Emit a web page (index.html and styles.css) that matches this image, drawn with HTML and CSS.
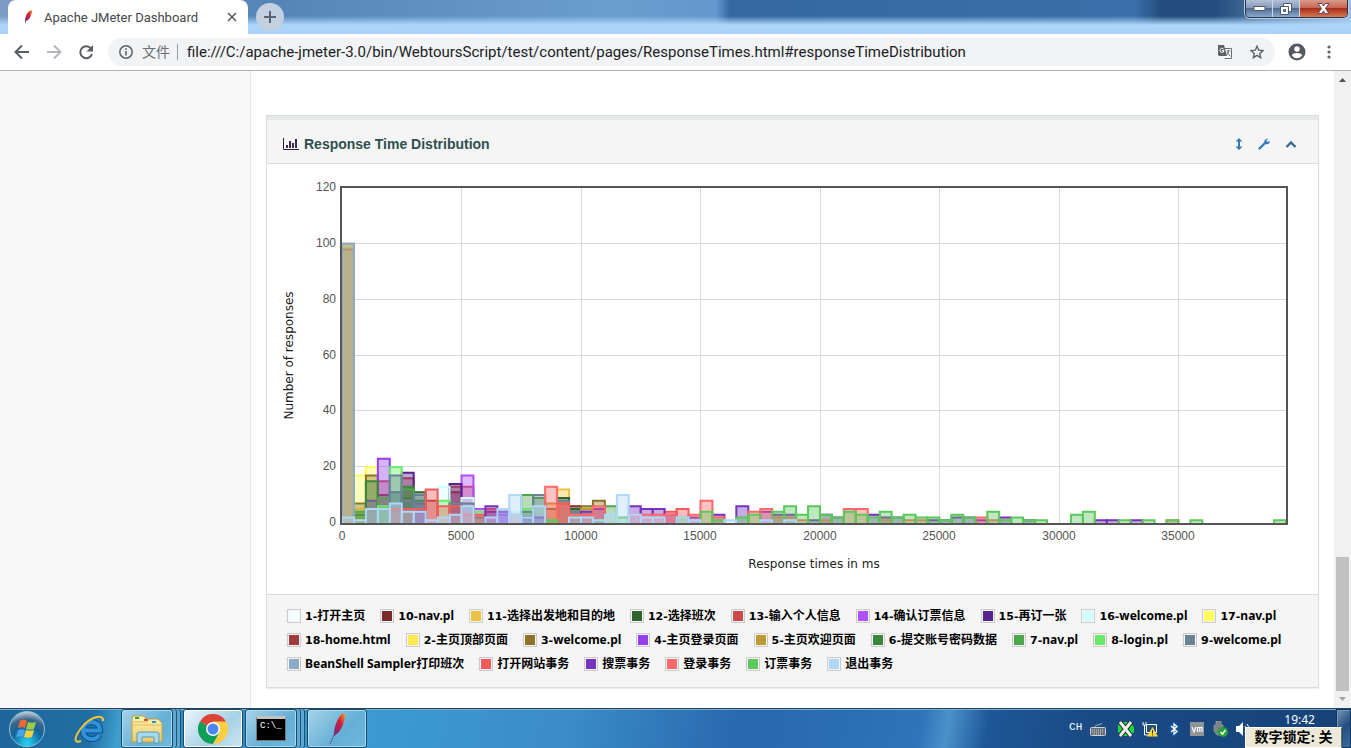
FILE: index.html
```
<!DOCTYPE html>
<html lang="zh">
<head>
    <meta charset="utf-8">
    <title>Apache JMeter Dashboard</title>
    <link rel="stylesheet" href="styles.css">
</head>
<body>
    <svg class="defs" width="0" height="0">
        <defs>
            <linearGradient id="feather" x1="1" y1="0" x2="0" y2="1">
                <stop offset="0" stop-color="#f9a01b"/>
                <stop offset=".4" stop-color="#d0203c"/>
                <stop offset="1" stop-color="#6c2a80"/>
            </linearGradient>
            <radialGradient id="orb" cx=".5" cy=".9" r=".9">
                <stop offset="0" stop-color="#25d6fb"/>
                <stop offset=".5" stop-color="#12639a"/>
                <stop offset=".75" stop-color="#3c6688"/>
                <stop offset="1" stop-color="#c6d4df"/>
            </radialGradient>
            <linearGradient id="folder" x1="0" y1="0" x2="0" y2="1">
                <stop offset="0" stop-color="#fff3b5"/>
                <stop offset="1" stop-color="#ecc964"/>
            </linearGradient>
        </defs>
    </svg>

    <header class="tabstrip">
        <div class="tab">
            <svg width="14" height="16" viewBox="0 0 14 16"><path d="M10 1c2 1 1 3 0 5-1 3-2 5-5 6l-1 3v-3c0-4 2-9 6-11z" fill="url(#feather)"/></svg>
            <span class="tab-title">Apache JMeter Dashboard</span>
            <button class="tab-close" aria-label="Close tab"><svg width="10" height="10" viewBox="0 0 10 10"><path d="M1 1l8 8M9 1l-8 8" stroke="#5f6368" stroke-width="1.7"/></svg></button>
        </div>
        <button class="new-tab" aria-label="New tab"><svg width="12" height="12" viewBox="0 0 12 12"><path d="M6 0v12M0 6h12" stroke="#596570" stroke-width="2"/></svg></button>
        <div class="window-buttons">
            <button aria-label="Minimize"><svg width="13" height="7" viewBox="0 0 13 7"><rect x="1" y="1.500" width="11" height="4" fill="#fff" stroke="#4c5971"/></svg></button>
            <button aria-label="Restore"><svg width="12" height="12" viewBox="0 0 12 12"><path d="M3.500.5h8v8h-8z" fill="#fff" stroke="#4c5971"/><path d="M.5 3.500h8v8h-8z" fill="#fff" stroke="#4c5971"/><path d="M3.500 6.500h2v2h-2z" fill="#8ca0be" stroke="#4c5971"/></svg></button>
            <button class="close" aria-label="Close"><svg width="13" height="11" viewBox="0 0 13 11"><path d="M1 .5h3.500l2 2.500 2-2.500H12L8.500 5.500l3.500 5H8.500l-2-2.500-2 2.500H1l3.500-5z" fill="#fff" stroke="#59485a"/></svg></button>
        </div>
    </header>

    <nav class="toolbar">
        <button aria-label="Back"><svg width="16" height="16" viewBox="0 0 16 16"><path d="M15 8H2M8 1.500L1.500 8 8 14.500" fill="none" stroke="#5a5e63" stroke-width="2"/></svg></button>
        <button aria-label="Forward"><svg width="16" height="16" viewBox="0 0 16 16"><path d="M1 8h13M8 1.500L14.500 8 8 14.500" fill="none" stroke="#b5b7ba" stroke-width="2"/></svg></button>
        <button aria-label="Reload"><svg width="16" height="16" viewBox="0 0 16 16"><path d="M13 4.500A6 6 0 1 0 14 10" fill="none" stroke="#5a5e63" stroke-width="2"/><path d="M15 1v6.500H8.500z" fill="#5a5e63"/></svg></button>
        <div class="omnibox">
            <svg width="14" height="14" viewBox="0 0 14 14"><circle cx="7" cy="7" r="6.200" fill="none" stroke="#5f6368" stroke-width="1.500"/><path d="M7 6v4.500M7 3.300v1.600" stroke="#5f6368" stroke-width="1.600"/></svg>
            <label for="url">文件</label>
            <input id="url" type="text" value="file:///C:/apache-jmeter-3.0/bin/WebtoursScript/test/content/pages/ResponseTimes.html#responseTimeDistribution">
            <button aria-label="Translate"><svg width="14" height="14" viewBox="0 0 14 14"><path d="M6 3.500h7.500v10H6.500" fill="#fff" stroke="#6b6f74"/><path d="M0 0h6l3 11H1L0 10z" fill="#5f6368"/><path d="M5.500 4A2 2 0 1 0 6 5.600H4" fill="none" stroke="#fff"/><path d="M8.500 6h4M10.500 5v1c0 2-1 3-2 4M9 7l3 4" fill="none" stroke="#6b6f74"/></svg></button>
            <button aria-label="Bookmark"><svg width="14" height="14" viewBox="0 0 14 14"><path d="M7 1.200l1.700 4 4.300.4-3.300 2.800 1 4.300L7 10.400l-3.700 2.300 1-4.300L1 5.600l4.300-.4z" fill="none" stroke="#5f6368" stroke-width="1.400"/></svg></button>
        </div>
        <button class="profile" aria-label="Profile"><svg width="18" height="18" viewBox="0 0 18 18"><circle cx="9" cy="9" r="8.500" fill="#555a60"/><circle cx="9" cy="6" r="2.700" fill="#fff"/><path d="M3.800 12.200c1-2.800 9.400-2.800 10.400 0-1.200 2-3 3-5.200 3s-4-1-5.200-3z" fill="#fff"/></svg></button>
        <button class="menu" aria-label="Menu"><svg width="4" height="14" viewBox="0 0 4 14"><g fill="#5f6368"><circle cx="2" cy="2" r="1.600"/><circle cx="2" cy="7" r="1.600"/><circle cx="2" cy="12" r="1.600"/></g></svg></button>
    </nav>

    <div class="viewport">
        <aside class="sidebar"></aside>
        <main>
            <section class="panel">
                <div class="panel-heading">
                    <svg width="16" height="14" viewBox="0 0 16 14"><path d="M.5 1v11.500H16" fill="none" stroke="#2a2230"/><path d="M4 11V8M7 11V4M10 11V6M13 11V2" stroke="#3c2c50" stroke-width="2"/></svg>
                    <h1>Response Time Distribution</h1>
                    <button aria-label="Resize"><svg width="8" height="12" viewBox="0 0 8 12"><path d="M4 0l3.500 3.500H5v5h2.500L4 12 .5 8.500H3v-5H.5z" fill="#337ab7"/></svg></button>
                    <button aria-label="Options"><svg width="12" height="12" viewBox="0 0 12 12"><path d="M1.500 10.500l6-6" stroke="#337ab7" stroke-width="2.400" stroke-linecap="round"/><path d="M11 .8L8.500 2l.2 1.600 1.500.2L11.800 3C12 5.500 9.500 7 7.500 6 5 4 6.500-.2 11 .8z" fill="#337ab7"/></svg></button>
                    <button aria-label="Collapse"><svg width="12" height="8" viewBox="0 0 12 8"><path d="M1.500 7L6 2.500 10.500 7" fill="none" stroke="#3b6a94" stroke-width="2.400"/></svg></button>
                </div>
                <div class="panel-body">
                    <svg id="chart" role="img" aria-label="Response Time Distribution"></svg>
                </div>
                <ul class="legend" id="legend"></ul>
            </section>
        </main>
        <div class="scrollbar">
            <svg width="7" height="4" viewBox="0 0 7 4"><path d="M3.500 0L7 4H0z" fill="#505050"/></svg>
            <div class="thumb"></div>
            <svg width="7" height="4" viewBox="0 0 7 4"><path d="M3.500 4L7 0H0z" fill="#a3a3a3"/></svg>
        </div>
    </div>

    <footer class="taskbar">
        <button class="start" aria-label="Start"><svg width="38" height="38" viewBox="0 0 38 38"><circle cx="19" cy="19" r="17.500" fill="url(#orb)" stroke="#8cc3df"/><path d="M12 11c3-2 5-1 7 0l-2 7c-2-1-4-1-7 0z" fill="#ee6a32"/><path d="M20 12c3 1 5 1 8 0l-2 7c-3 1-5 1-8 0z" fill="#9ccb45"/><path d="M10 20c3-1 5-1 7 0l-2 7c-2-1-4-1-7 0z" fill="#45a4e6"/><path d="M18 20c3 1 5 1 8 0l-2 7c-3 1-5 1-8 0z" fill="#fbcf3e"/></svg></button>
        <button class="pin" aria-label="Internet Explorer"><svg width="34" height="34" viewBox="0 0 34 34"><path d="M12 18.500H28C28 7 11 7 11 18.500 11 29 25 29 27 23" fill="none" stroke="#0f4f92" stroke-width="6"/><path d="M12 18.500H28C28 7 11 7 11 18.500 11 29 25 29 27 23" fill="none" stroke="#2f93d8" stroke-width="4"/><path d="M31 9c1-8-13-4-21 6C2 25 1 32 9 29" fill="none" stroke="#f3c433" stroke-width="2"/></svg></button>
        <button class="task stacked" aria-label="Explorer"><svg width="34" height="30" viewBox="0 0 34 30"><path d="M3 2h11l2 3h12l4 4v19H2V5z" fill="url(#folder)" stroke="#c29f43"/><path d="M5 4h4" stroke="#2aa53c" stroke-width="2"/><path d="M14 6h4" stroke="#d2502c" stroke-width="2"/><path d="M22 8h4" stroke="#2d8fd2" stroke-width="2"/><path d="M3 8h15M3 11h28" stroke="#dcbb5c"/><path d="M7 29V20q0-2 2-2h18q2 0 2 2v9h-5v-6H12v6z" fill="#a6d8ef" stroke="#599bbc"/></svg></button>
        <button class="task active" aria-label="Chrome"><svg width="30" height="30" viewBox="0 0 30 30"><path d="M15 15L2 7.500A15 15 0 0 1 28 7.500z" fill="#dc4437"/><path d="M15 15L2 7.500A15 15 0 0 0 15 30l6-11z" fill="#0f9d58"/><path d="M15 7.500h13A15 15 0 0 1 15 30l6.500-11z" fill="#fdcd40"/><circle cx="15" cy="15" r="7" fill="#fff"/><circle cx="15" cy="15" r="5.500" fill="#4a87f0"/></svg></button>
        <button class="task stacked" aria-label="Command Prompt"><span class="console">C:\_</span></button>
        <button class="task" aria-label="JMeter"><svg width="20" height="34" viewBox="0 0 20 34"><path d="M16 1c4 1 1 13-5 20l-4 3c-1-7 4-20 9-23z" fill="url(#feather)"/><path d="M7 23l-4 9" stroke="#62306f" stroke-dasharray="2 1"/></svg></button>
        <div class="tray">
            <span class="lang">CH</span>
            <svg width="16" height="16" viewBox="0 0 16 16"><path d="M5 6c0-3 5-1 7-4" fill="none" stroke="#aeb8bc"/><rect x=".5" y="6.500" width="15" height="8" rx="1" fill="#657078" stroke="#ccd1d3"/><path d="M2 9h12M2 11h12M4 13h8" stroke="#d4d7d8" stroke-dasharray="1 1"/></svg>
            <svg class="gap" width="16" height="16" viewBox="0 0 16 16"><path d="M0 4l4-3h8l4 5v5l-4 4H3l-3-4z" fill="#16da3c"/><path d="M2 1l11 14M13 1L2 15" stroke="#222" stroke-width="5"/><path d="M2 1l11 14M13 1L2 15" stroke="#eee" stroke-width="3"/></svg>
            <svg width="16" height="16" viewBox="0 0 16 16"><path d="M4.500 3.500h10v8h-10z" fill="#235080" stroke="#fff"/><path d="M1 1v3h3V1M2.500 4v10H8" fill="none" stroke="#fff"/><path d="M10.500 6l5.500 9.500H5z" fill="#f9d83b"/><path d="M10.500 9v3.500M10.500 13.500v1" stroke="#333"/></svg>
            <svg width="16" height="16" viewBox="0 0 16 16"><ellipse cx="8" cy="8" rx="5.500" ry="7.500" fill="#124f9a"/><path d="M5 5l6 5.500L8 13V3l3 2.500L5 11" fill="none" stroke="#fff" stroke-width="1.300"/></svg>
            <svg width="14" height="14" viewBox="0 0 14 14"><rect width="14" height="14" fill="#8e9498"/><path d="M2 5l2 5 2-5M7.500 10V5.500H12V10M9.800 5.500V10" fill="none" stroke="#fff" stroke-width="1.200"/></svg>
            <svg width="16" height="16" viewBox="0 0 16 16"><path d="M4 0h5v4h2v6l-3 4H5L2 10V4h2z" fill="#7c8285" stroke="#a9adaf" stroke-width=".6"/><circle cx="11" cy="11" r="5" fill="#25a335"/><path d="M8.500 11l2 2 3-4" fill="none" stroke="#fff" stroke-width="1.500"/></svg>
            <svg width="14" height="14" viewBox="0 0 14 14"><path d="M0 4h3l4-4v14l-4-4H0z" fill="#fff"/><path d="M9 4q2 3 0 6M11 2q4 5 0 10" fill="none" stroke="#fff"/></svg>
        </div>
        <time>19:42</time>
        <button class="show-desktop" aria-label="Show desktop"></button>
        <div class="tooltip">数字锁定: 关</div>
    </footer>

    <script src="chart.js"></script>
</body>
</html>
```
FILE: styles.css
```
* {
    box-sizing: border-box;
}
body {
    margin: 0;
    height: 100vh;
    display: flex;
    flex-direction: column;
    overflow: hidden;
    background: white;
    font-family: "Noto Sans", "Noto Sans CJK SC", sans-serif;
}
button {
    padding: 0;
    border: none;
    background: none;
    display: flex;
    align-items: center;
    justify-content: center;
}
svg {
    display: block;
    flex: none;
}
.defs {
    position: absolute;
}

/* browser window */
.tabstrip {
    height: 34px;
    flex: none;
    display: flex;
    padding-left: 8px;
    background:
        linear-gradient(to bottom, transparent 16px, #aed6f9 25px, #abd2f6),
        linear-gradient(to right, #7c9cc4, #5585b8 20%, #6c9dd0 45%, #6497cd 53%, #34689f 54%, #3a70a9 84%, #214c7b 86%, #234e7d 90%, #9dbce0);
}
.tab {
    width: 240px;
    display: flex;
    align-items: center;
    padding: 0 11px 0 13px;
    background: white;
    border-radius: 8px 8px 0 0;
}
.tab-title {
    flex: 1;
    margin-left: 9px;
    font-family: "Roboto", sans-serif;
    font-size: 13px;
    color: #45484c;
    white-space: nowrap;
}
.new-tab {
    width: 28px;
    height: 28px;
    margin: 3px 0 0 8px;
    border-radius: 50%;
    background: #c3d0df;
}
.window-buttons {
    height: 18px;
    margin: 0 3px 0 auto;
    display: flex;
    border: 1px solid #29384f;
    border-top: none;
    border-radius: 0 0 5px 5px;
    box-shadow: 0 0 0 1px #b7cbe2;
    overflow: hidden;
}
.window-buttons button {
    width: 27px;
    border-right: 1px solid #ccd8e8;
    background: linear-gradient(#b2c1d5, #8299b8 48%, #536c91 50%, #8ba8ce);
}
.window-buttons .close {
    width: 47px;
    border: none;
    background: linear-gradient(#d99a8b, #c56350 48%, #a92d18 50%, #d67951);
}
.toolbar {
    height: 37px;
    flex: none;
    display: flex;
    align-items: center;
    padding: 0 20px 0 14px;
    border-bottom: 1px solid #b3b3b3;
}
.toolbar > button {
    width: 16px;
    margin-right: 16px;
}
.omnibox {
    flex: 1;
    height: 28px;
    margin-left: -2px;
    display: flex;
    align-items: center;
    padding: 0 11px;
    border-radius: 14px;
    background: #f1f3f4;
}
.omnibox label {
    margin-left: 9px;
    padding-right: 7px;
    border-right: 1px solid #9b9ea1;
    font-size: 14px;
    line-height: 16px;
    color: #6b6f73;
}
.omnibox input {
    flex: 1;
    min-width: 0;
    padding: 0 0 0 9px;
    border: none;
    background: none;
    font-family: "Roboto", sans-serif;
    font-size: 15px;
    color: #202124;
}
.omnibox button {
    margin-left: 18px;
}
.toolbar .profile {
    width: 18px;
    margin: 0 21px 0 13px;
}
.toolbar .menu {
    width: 4px;
    margin: 0;
}

/* report page */
.viewport {
    flex: 1;
    min-height: 0;
    display: flex;
}
.sidebar {
    width: 251px;
    flex: none;
    background: #f8f8f8;
    border-right: 1px solid #e7e7e7;
}
main {
    flex: 1;
    min-width: 0;
    padding: 44px 15px;
}
.panel {
    border: 1px solid #ddd;
    box-shadow: 0 1px 1px #eee;
}
.panel-heading {
    height: 48px;
    display: flex;
    align-items: center;
    padding: 5px 21px 0 16px;
    border-top: 4px solid #e6e9ea;
    border-bottom: 1px solid #ddd;
    background: #f5f5f5;
}
.panel-heading h1 {
    flex: 1;
    margin: 0 0 0 5px;
    font: bold 14px "Liberation Sans", sans-serif;
    color: #2f4f4f;
}
.panel-heading button {
    margin-left: 15px;
}
.panel-body {
    height: 430px;
}
#chart {
    width: 100%;
    height: 100%;
}
.tick {
    font: 12px "Liberation Sans", sans-serif;
    fill: #545454;
}
.axis-title {
    font: 12px "DejaVu Sans", sans-serif;
    fill: #222;
}
.grid {
    stroke: #d9d9d9;
}
.frame {
    fill: none;
    stroke: #545454;
    stroke-width: 2;
}
.legend {
    margin: 0;
    padding: 9px 16px 11px 20px;
    display: flex;
    flex-wrap: wrap;
    column-gap: 15px;
    list-style: none;
    background: #f5f5f5;
    border-top: 1px solid #ddd;
    font-size: 12px;
    font-weight: bold;
    line-height: 24px;
}
.legend li {
    display: flex;
    align-items: center;
    height: 24px;
    white-space: nowrap;
}
.legend .number {
    font-family: "DejaVu Sans", sans-serif;
    font-size: 11px;
}
.swatch {
    width: 14px;
    height: 14px;
    margin-right: 4px;
    padding: 1px;
    border: 1px solid #ccc;
    background-color: white;
    background-clip: content-box;
}
.scrollbar {
    width: 17px;
    flex: none;
    display: flex;
    flex-direction: column;
    align-items: center;
    padding: 7px 0;
    background: #f1f1f1;
}
.thumb {
    width: 13px;
    height: 134px;
    margin: auto 0 6px;
    background: #c1c1c1;
}

/* windows taskbar */
.taskbar {
    position: relative;
    height: 40px;
    flex: none;
    display: flex;
    align-items: center;
    border-top: 1px solid #27445f;
    box-shadow: inset 0 1px #79add2;
    background: linear-gradient(100deg, #1d6699, #216fa4 7%, #3e9fcd 9%, #2c8ac0 15%, #3c9bd1 27%, #3b8cc9 42%, #2868ac 55%, #2d74b8 68%, #4a91cb 70%, #1d5797 73%, #1a4b85 80%, #164277);
}
.start {
    width: 38px;
    margin-left: 8px;
}
.pin {
    width: 34px;
    margin: 0 15px 0 26px;
}
.task {
    width: 60px;
    height: 39px;
    margin: 0 2px 0 0;
    border: 1px solid #1d4a6b;
    border-radius: 3px;
    box-shadow: inset 0 0 0 1px #a9d8ef;
    background: linear-gradient(135deg, #a8d3e8, #64afd6 60%, #6dbbdd);
}
.task.active {
    background: linear-gradient(135deg, #edf6fa, #a6d1e7 60%, #cfe7f2);
    box-shadow: inset 0 0 0 1px white;
}
.task.stacked {
    width: 52px;
    margin-right: 10px;
    box-shadow: inset 0 0 0 1px #a9d8ef, 3px 0 #5da9d1, 4px 0 #1e5273, 7px 0 #5da9d1, 8px 0 #1e5273;
}
.console {
    width: 30px;
    height: 25px;
    padding-left: 3px;
    border: 1px solid #777;
    border-top: 3px solid #c3c3c3;
    background: black;
    color: white;
    font: 9px/14px "Liberation Mono", monospace;
    text-align: left;
}
.tray {
    display: flex;
    align-items: center;
    gap: 8px;
    margin: 0 34px 0 auto;
}
.tray .gap {
    margin-left: 4px;
}
.lang {
    margin-bottom: 4px;
    font: 11px "Liberation Mono", monospace;
    color: white;
}
time {
    align-self: flex-start;
    margin: 2px 21px 0 0;
    font-size: 12px;
    line-height: 17px;
    color: white;
}
.show-desktop {
    width: 15px;
    height: 39px;
    border: 1px solid #11375e;
    box-shadow: inset 1px 1px #7098bf;
    background: linear-gradient(135deg, #7796b8, #234e7e 50%, #3a6c9d);
}
.tooltip {
    position: absolute;
    right: 9px;
    bottom: 0;
    width: 97px;
    height: 21px;
    border: 1px solid #fff;
    border-right-color: #666;
    background: #ece9d8;
    font: bold 14px/20px "Liberation Serif", "Noto Sans CJK SC", serif;
    text-align: center;
    white-space: nowrap;
}
```
FILE: chart.js
```
// bars are [bin, responses], one bin is 500 ms
const series = [
    { label: '1-打开主页', color: '#f4ffff', bars: [[0,100],[1,14],[2,12]] },
    { label: '10-nav.pl', color: '#7c2b2d', bars: [[3,10],[5,12],[9,11],[19,6]] },
    { label: '11-选择出发地和目的地', color: '#edc240', bars: [[18,12]] },
    { label: '12-选择班次', color: '#2d652d', bars: [[6,11],[5,9],[18,9],[19,5]] },
    { label: '13-输入个人信息', color: '#cb4b4b', bars: [[3,15],[5,16],[9,13],[10,13]] },
    { label: '14-确认订票信息', color: '#b14fff', bars: [[10,17],[11,5],[13,4]] },
    { label: '15-再订一张', color: '#57238c', bars: [[5,18],[9,14],[12,4]] },
    { label: '16-welcome.pl', color: '#d1ffff', bars: [[8,13],[10,9],[14,4]] },
    { label: '17-nav.pl', color: '#ffff55', bars: [[1,17],[2,20]] },
    { label: '18-home.html', color: '#a23c3c', bars: [[0,98],[7,8],[17,5]] },
    { label: '2-主页顶部页面', color: '#ffe84d', bars: [[0,99],[1,5]] },
    { label: '3-welcome.pl', color: '#8e7426', bars: [[1,7],[2,17],[20,6],[21,8]] },
    { label: '4-主页登录页面', color: '#9440ed', bars: [[2,8],[3,23],[6,7],[13,3]] },
    { label: '5-主页欢迎页面', color: '#bd9b33', bars: [[0,100],[17,7],[20,5]] },
    { label: '6-提交账号密码数据', color: '#3c853c', bars: [[1,3],[2,15],[4,11],[5,13],[6,8]] },
    { label: '7-nav.pl', color: '#4da74d', bars: [[1,4],[3,9],[5,12],[15,10],[16,9],[22,6]] },
    { label: '8-login.pl', color: '#6aea6a', bars: [[3,6],[4,20],[8,8],[11,4],[15,5]] },
    { label: '9-welcome.pl', color: '#698296', bars: [[4,17],[4,11],[5,8],[6,10],[9,7],[10,7],[11,2],[15,4],[16,10],[18,8],[19,4]] },
    { label: 'BeanShell Sampler打印班次', color: '#8cacc6', bars: [[0,100]] },
    { label: '打开网站事务', color: '#f55a5a', bars: [[4,5],[5,5],[6,5],[7,12],[8,6],[9,6],[11,3],[12,5],[14,3],[18,7],[27,4],[28,5]] },
    { label: '搜票事务', color: '#7633bd', bars: [[6,4],[12,6],[13,4],[15,2],[16,2],[20,4],[21,5],[24,6],[25,5],[26,5],[27,3],[29,2],[31,3],[33,6],[35,4],[36,3],[37,3],[39,1],[40,3],[41,2],[44,3],[45,2],[46,2],[49,1],[50,1],[51,2],[52,2],[53,1],[55,2],[57,1],[63,1],[64,1],[66,1]] },
    { label: '登录事务', color: '#ff6969', bars: [[10,3],[17,13],[18,6],[19,3],[20,3],[21,6],[24,3],[25,3],[26,3],[27,3],[29,3],[30,8],[31,2],[34,4],[35,5],[36,2],[37,2],[38,1],[40,1],[42,5],[43,5],[45,1],[47,1],[48,1],[53,2],[54,1],[69,1]] },
    { label: '订票事务', color: '#5cc85c', bars: [[17,1],[21,1],[23,2],[28,2],[30,4],[31,1],[33,2],[34,3],[36,4],[37,6],[38,3],[39,6],[40,3],[41,2],[42,4],[43,3],[44,2],[45,4],[46,2],[47,3],[48,2],[49,2],[50,1],[51,3],[52,2],[54,4],[55,1],[56,2],[57,1],[58,1],[61,3],[62,4],[65,1],[67,1],[69,1],[71,1],[78,1]] },
    { label: '退出事务', color: '#afd8f8', bars: [[0,2],[1,1],[2,5],[3,5],[4,7],[5,4],[6,4],[7,1],[8,2],[9,3],[10,6],[12,2],[13,5],[14,10],[14,3],[15,2],[16,6],[19,2],[20,2],[21,1],[22,3],[23,10],[24,3],[25,2],[26,2],[28,2],[29,1],[32,1],[35,1],[37,1]] }
];

const chart = document.getElementById('chart');
const bins = 79;
const plotLeft = 75;
const plotTop = 24;
const plotBottom = 359;

const add = (name, attrs, text) => {
    const el = document.createElementNS('http://www.w3.org/2000/svg', name);
    for (let key in attrs) el.setAttribute(key, attrs[key]);
    if (text !== undefined) el.textContent = text;
    chart.appendChild(el);
};

const draw = () => {
    chart.innerHTML = '';
    const plotRight = chart.clientWidth - 32;
    const binWidth = (plotRight - plotLeft) / bins;
    const y = v => plotBottom - v * (plotBottom - plotTop) / 120;

    for (let v = 0; v <= 120; v += 20) {
        const py = Math.round(y(v));
        if (v > 0 && v < 120) add('path', { class: 'grid', d: `M${plotLeft} ${py - 0.5}H${plotRight}` });
        add('text', { class: 'tick', x: plotLeft - 6, y: py + 3, 'text-anchor': 'end' }, v);
    }
    for (let ms = 0; ms <= 35000; ms += 5000) {
        const px = Math.round(plotLeft + ms / 500 * binWidth);
        if (ms > 0) add('path', { class: 'grid', d: `M${px + 0.5} ${plotTop}V${plotBottom}` });
        add('text', { class: 'tick', x: px, y: plotBottom + 17, 'text-anchor': 'middle' }, ms);
    }

    series.forEach(s => {
        s.bars.forEach(([bin, count]) => {
            const x1 = plotLeft + bin * binWidth;
            const x2 = x1 + binWidth;
            add('path', {
                d: `M${x1} ${plotBottom}V${y(count)}H${x2}V${plotBottom}`,
                fill: s.color,
                'fill-opacity': 0.4,
                stroke: s.color,
                'stroke-width': 2
            });
        });
    });

    add('rect', { class: 'frame', x: plotLeft - 1, y: plotTop - 1, width: plotRight - plotLeft + 2, height: plotBottom - plotTop + 2 });
    add('text', { class: 'axis-title', x: (plotLeft + plotRight) / 2, y: plotBottom + 45, 'text-anchor': 'middle' }, 'Response times in ms');
    add('text', { class: 'axis-title', transform: `translate(26 ${(plotTop + plotBottom) / 2}) rotate(-90)`, 'text-anchor': 'middle' }, 'Number of responses');
};

const legend = document.getElementById('legend');
series.forEach(s => {
    const item = document.createElement('li');
    const text = s.label.replace(/^\d+-/, '<span class="number">$&</span>');
    item.innerHTML = `<span class="swatch" style="background-color: ${s.color}"></span><span>${text}</span>`;
    legend.appendChild(item);
});

draw();
window.addEventListener('resize', draw);
```
